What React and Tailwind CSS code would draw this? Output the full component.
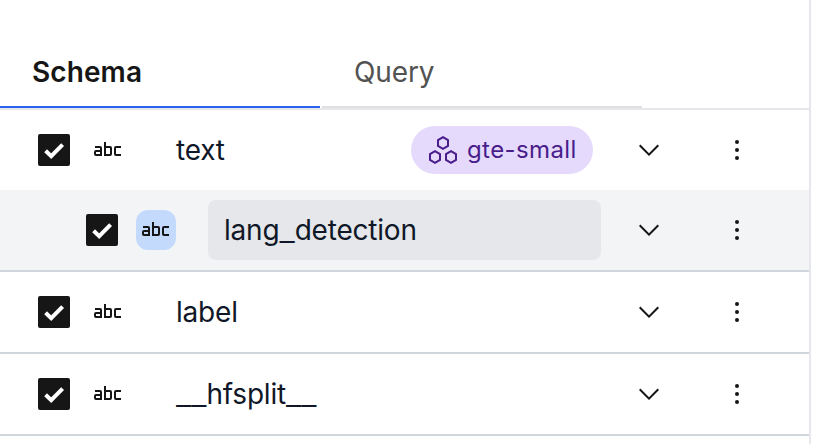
import { Fragment } from "react";

function Checkbox() {
  return (
    <span className="flex size-8 shrink-0 items-center justify-center rounded-[2px] bg-[#161616]">
      <svg viewBox="0 0 32 32" className="size-8" fill="none" stroke="#fff" strokeWidth="4">
        <path d="M7.6 16.7 13.2 22.1 24.6 10.6" />
      </svg>
    </span>
  );
}

function StringIcon() {
  return (
    <svg viewBox="0 0 32 32" className="size-8 shrink-0" fill="#161616">
      <path d="M29,22H24a2,2,0,0,1-2-2V14a2,2,0,0,1,2-2h5v2H24v6h5Z" />
      <path d="M18,12H14V8H12V22h6a2,2,0,0,0,2-2V14A2,2,0,0,0,18,12Zm-4,8V14h4v6Z" />
      <path d="M8,12H3v2H8v2H4a2,2,0,0,0-2,2v2a2,2,0,0,0,2,2h6V14A2,2,0,0,0,8,12Zm0,8H4V18H8Z" />
    </svg>
  );
}

function ModelIcon() {
  return (
    <svg viewBox="0 0 32 32" className="size-8" fill="none" stroke="#491d8b" strokeWidth="2">
      <path d="M16 3.2 21 6.1V11.9L16 14.8 11 11.9V6.1Z" />
      <path d="M8 17.2 13 20.1V25.9L8 28.8 3 25.9V20.1Z" />
      <path d="M24 17.2 29 20.1V25.9L24 28.8 19 25.9V20.1Z" />
    </svg>
  );
}

function RowActions() {
  return (
    <div className="flex items-center gap-14 pr-14">
      <svg viewBox="0 0 32 32" className="size-8" fill="#161616">
        <path d="M16 22 6 12 7.4 10.6 16 19.2 24.6 10.6 26 12Z" />
      </svg>
      <svg viewBox="0 0 32 32" className="size-8" fill="#161616">
        <circle cx="16" cy="8" r="2" />
        <circle cx="16" cy="16" r="2" />
        <circle cx="16" cy="24" r="2" />
      </svg>
    </div>
  );
}

function FieldName({ children }) {
  return (
    <span className="tracking-[-0.2px]">
      {children.split(/(_+)/).map((part, i) =>
        part.startsWith("_") ? (
          <span key={i} className="align-[-1px] text-[34px] leading-none font-light tracking-normal">
            {part}
          </span>
        ) : (
          <Fragment key={i}>{part}</Fragment>
        )
      )}
    </span>
  );
}

function FieldRow({ name, badge }) {
  return (
    <div className="flex h-20 items-center pl-[38px]">
      <Checkbox />
      <div className="ml-[22px]">
        <StringIcon />
      </div>
      <div className="ml-[52px] flex-1 text-gray-900">
        <FieldName>{name}</FieldName>
      </div>
      {badge && (
        <div className="mr-10 flex h-12 w-[182px] items-center gap-2 rounded-full bg-[#e5dafb] pl-4 text-2xl tracking-[0.4px] text-[#491d8b]">
          <ModelIcon />
          {badge}
        </div>
      )}
      <RowActions />
    </div>
  );
}

function DerivedRow({ name }) {
  return (
    <div className="flex h-20 items-center bg-gray-100 pl-[86px]">
      <Checkbox />
      <div className="ml-[18px] flex size-10 items-center justify-center rounded-xl bg-[#c3dafd]">
        <StringIcon />
      </div>
      <div className="mr-8 ml-8 flex h-[60px] flex-1 items-center rounded-lg bg-gray-200 px-4 text-gray-900">
        <FieldName>{name}</FieldName>
      </div>
      <RowActions />
    </div>
  );
}

export default function App() {
  return (
    <div className="h-[444px] w-[818px] overflow-hidden bg-white font-['Inter',sans-serif] text-[28px] leading-10">
      <div className="h-full w-[811px] border-r-2 border-[#e5e7eb]">
        <div className="flex h-[110px] items-end gap-0.5 border-b-2 border-[#e5e7eb]">
          <div className="h-[72px] w-80 border-b-2 border-[#2c62f0] px-8 pt-4 font-semibold tracking-[0.1px] text-[#161616]">
            Schema
          </div>
          <div className="h-[72px] w-80 border-b-2 border-[#e0e0e0] px-8 pt-4 tracking-[-0.1px] text-[#525252]">
            Query
          </div>
        </div>
        <div className="border-b-2 border-gray-300">
          <FieldRow name="text" badge="gte-small" />
          <DerivedRow name="lang_detection" />
        </div>
        <div className="border-b-2 border-gray-300">
          <FieldRow name="label" />
        </div>
        <div className="border-b-2 border-gray-300">
          <FieldRow name="__hfsplit__" />
        </div>
      </div>
    </div>
  );
}
